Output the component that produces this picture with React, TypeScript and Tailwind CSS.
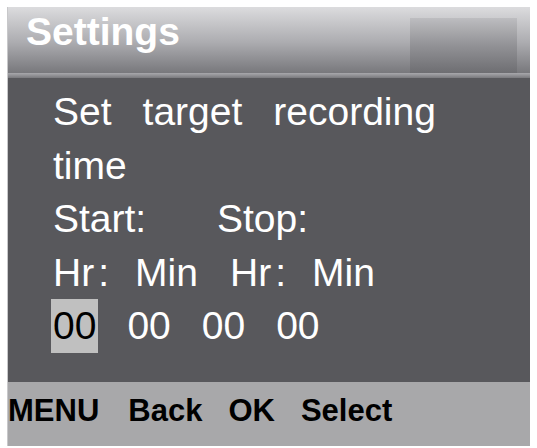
const App = () => {
  return (
    <div className="w-[537px] h-[448px] bg-white pt-[7px] pl-[7px] font-['Liberation_Sans',Arial,sans-serif] overflow-hidden">
      <div className="w-[523px] h-[439px] flex flex-col border-l border-[#c8c8ca]">
        {/* header */}
        <div className="h-[71px] flex flex-col bg-gradient-to-b from-[#dcdcde] via-[#acacb0] to-[#707074]">
          <div className="flex flex-1">
            <div className="flex-1 pl-[18px] pt-[4px] text-[39px] leading-[41px] font-bold text-white">
              Settings
            </div>
            <div className="w-[107px] mt-[11px] mr-[13px] bg-gradient-to-b from-[#bdbdc0] via-[#929296] to-[#6e6e72]" />
          </div>
          <div className="h-[5px] bg-gradient-to-b from-[#a8a8ac] to-[#7a7a7e]" />
        </div>

        {/* body */}
        <div className="flex-1 bg-[#58585c] pl-[45px] pt-[7px] text-white text-[39px] leading-[53.5px]">
          <div className="flex gap-[31px]">
            <span>Set</span>
            <span>target</span>
            <span>recording</span>
          </div>
          <div>time</div>
          <div className="flex">
            <span className="w-[164px]">Start:</span>
            <span>Stop:</span>
          </div>
          <div className="flex">
            <span className="w-[82px]">Hr<span className="ml-[4px]">:</span></span>
            <span className="w-[95px]">Min</span>
            <span className="w-[82px]">Hr<span className="ml-[4px]">:</span></span>
            <span>Min</span>
          </div>
          <div className="flex gap-[31px]">
            <span className="-mx-[2px] px-[2px] bg-[#c0c0c0] text-black">00</span>
            <span>00</span>
            <span>00</span>
            <span>00</span>
          </div>
        </div>

        {/* footer */}
        <div className="h-[64px] bg-[#a8a8aa] pt-[13px] flex gap-[26px] text-[31px] leading-[31px] font-bold text-black">
          <span className="mr-[3px]">MENU</span>
          <span>Back</span>
          <span>OK</span>
          <span>Select</span>
        </div>
      </div>
    </div>
  );
};

export default App;
